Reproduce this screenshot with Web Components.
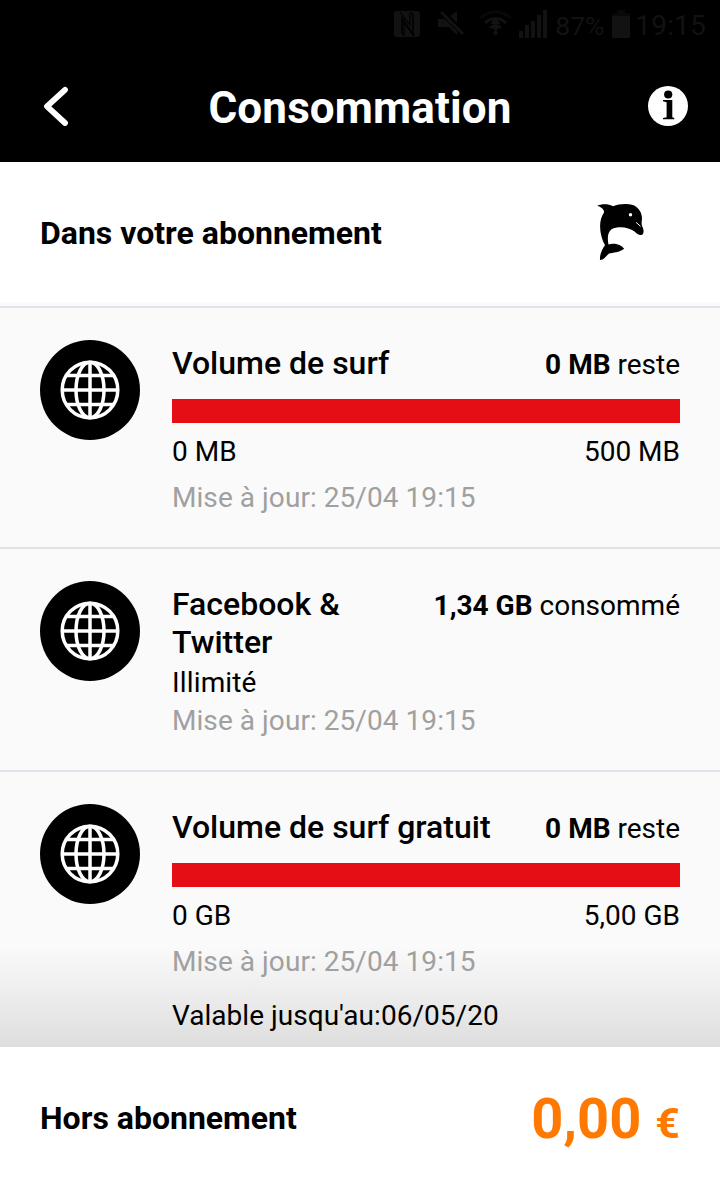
<!DOCTYPE html>
<html lang="fr">
<head>
<meta charset="utf-8">
<title>Consommation</title>
<style>
  body {
    margin: 0;
    width: 720px;
    height: 1187px;
    overflow: hidden;
    display: flex;
    flex-direction: column;
    background: #fff;
    color: #000;
    font-family: Roboto, sans-serif;
  }
  main {
    flex: 1;
    min-height: 0;
    background: #fafafa;
    overflow: hidden;
  }
</style>
</head>
<body>
  <status-bar battery="87%" time="19:15"></status-bar>
  <app-header>Consommation</app-header>
  <plan-heading>Dans votre abonnement</plan-heading>
  <main>
    <usage-item name="Volume de surf" from="0 MB" to="500 MB">
      <b slot="amount">0 MB</b><span slot="amount"> reste</span>
      <span slot="updated">Mise à jour: 25/04 19:15</span>
    </usage-item>
    <usage-item name="Facebook &amp; Twitter" note="Illimité">
      <b slot="amount">1,34 GB</b><span slot="amount"> consommé</span>
      <span slot="updated">Mise à jour: 25/04 19:15</span>
    </usage-item>
    <usage-item name="Volume de surf gratuit" from="0 GB" to="5,00 GB" valid="Valable jusqu'au:06/05/20" last>
      <b slot="amount">0 MB</b><span slot="amount"> reste</span>
      <span slot="updated">Mise à jour: 25/04 19:15</span>
    </usage-item>
  </main>
  <total-bar amount="0,00" currency="€">Hors abonnement</total-bar>

<script>
class StatusBar extends HTMLElement {
  connectedCallback() {
    this.attachShadow({ mode: 'open' });
    this.shadowRoot.innerHTML = `
      <style>
        :host {
          display: flex;
          flex: none;
          align-items: center;
          justify-content: flex-end;
          box-sizing: border-box;
          height: 50px;
          padding-right: 14px;
          background: #000;
          color: #121212;
          font-size: 28px;
        }
        svg {
          display: block;
          fill: currentColor;
        }
        .icons { margin-right: 8px; }
        .percent { font-size: 26.500px; width: 50px; }
        .battery { margin: 0 5px 2px 7px; }
        .time { letter-spacing: .2px; }
      </style>
      <svg class="icons" width="155" height="50" viewBox="391 0 155 50">
        <rect x="393" y="11" width="26" height="26" rx="3"/>
        <path d="M403.500 35.500l-2.500-2.500V18l11 16.500V14.500l-2-2" fill="none" stroke="#000" stroke-width="1.500"/>
        <path d="M399 12l10 13V12.500M413 36l-10-13v12" fill="none" stroke="#000" stroke-width="1.200"/>
        <path d="M437 19h8l11-8v24l-8-8h-11z"/>
        <path d="M440.500 11.500l22.500 22.500" stroke="#000" stroke-width="6"/>
        <path d="M440 12l22 22" stroke="currentColor" stroke-width="2.800"/>
        <path d="M479 18q15.500-12 31 0" fill="none" stroke="#080808" stroke-width="3"/>
        <path d="M484 23q10.500-9 21 0M489 28q5.500-5 11 0" fill="none" stroke="currentColor" stroke-width="3"/>
        <path d="M494.500 17l5 7h-10zM490 27h9l-4.500 4z"/>
        <circle cx="494.500" cy="33" r="2.200"/>
        <path d="M518 31h4v7h-4zM524 25h4v13h-4zM530 21h4v17h-4zM536 15h4v23h-4zM542 10h4v28h-4z"/>
      </svg>
      <span class="percent">${this.getAttribute('battery')}</span>
      <svg class="battery" width="18" height="28" viewBox="0 0 18 28">
        <path d="M5 0h8v3h5v3H0V3h5z" fill="#080808"/>
        <path d="M0 6h18v22H0z"/>
      </svg>
      <span class="time">${this.getAttribute('time')}</span>
    `;
  }
}

class AppHeader extends HTMLElement {
  connectedCallback() {
    this.attachShadow({ mode: 'open' });
    this.shadowRoot.innerHTML = `
      <style>
        :host {
          display: grid;
          flex: none;
          grid-template-columns: 40px 1fr 40px;
          align-items: start;
          box-sizing: border-box;
          height: 112px;
          padding: 32px 32px 0 32px;
          background: #000;
          color: #fff;
        }
        svg { display: block; margin-top: 4px; }
        h1 {
          margin: 0;
          font-size: 44px;
          line-height: 52px;
          font-weight: 700;
          letter-spacing: .13px;
          text-align: center;
        }
      </style>
      <svg width="40" height="40" viewBox="-4 0 40 40" fill="none" stroke="#fff" stroke-width="5.800" stroke-linecap="round" stroke-linejoin="round">
        <path d="M29 3.800L11 20.400L29 37"/>
      </svg>
      <h1><slot></slot></h1>
      <svg width="40" height="40" viewBox="0 0 40 40">
        <circle cx="20" cy="20" r="20" fill="#fff"/>
        <circle cx="20.200" cy="8.500" r="4.100"/>
        <path d="M15 14h9.300v17.300l2 .7v1.300H15V32l3.600-.7V16.200L15 15.300z"/>
      </svg>
    `;
  }
}

class PlanHeading extends HTMLElement {
  connectedCallback() {
    this.attachShadow({ mode: 'open' });
    this.shadowRoot.innerHTML = `
      <style>
        :host {
          display: flex;
          flex: none;
          align-items: center;
          justify-content: space-between;
          box-sizing: border-box;
          height: 146px;
          padding: 0 70px 2px 40px;
          background: linear-gradient(#fff 140px, #fafafa 140px);
          border-bottom: 2px solid #dfe2e8;
        }
        h2 {
          margin: 0;
          font-size: 32px;
          font-weight: 700;
        }
        svg { display: block; }
      </style>
      <h2><slot></slot></h2>
      <svg width="60" height="66" viewBox="590 200 60 66">
        <path d="M597.300 205.800C601 204 608 203.500 613 206.300C619 203.800 627 203.500 633 205C639 207.500 642 213 642 219C641.500 222 641.500 224 642 226C643.500 229 644.500 232 642.500 234.500C640 236 637 234 634.500 231.500C629 227.500 619 225.500 611.500 229.300C608 232 607 237 608.500 244.500C613 242.500 621 244 624.200 248.700C619 252.500 613 252.500 609 253.500C606 256 604 260 600 260C599.500 255 602 249 605 245.300C600 236 597.500 222 604 212.500C604.500 209.500 601 207 597.300 205.800z"/>
        <circle cx="630.500" cy="214.800" r="1.700" fill="#fff"/>
        <path d="M636 222.300l4.500 4" stroke="#fff" stroke-width="1"/>
      </svg>
    `;
  }
}

class GlobeBadge extends HTMLElement {
  connectedCallback() {
    this.attachShadow({ mode: 'open' });
    this.shadowRoot.innerHTML = `
      <style>
        :host {
          display: grid;
          place-items: center;
          width: 100px;
          height: 100px;
          border-radius: 50%;
          background: #000;
        }
        svg { display: block; }
      </style>
      <svg width="60" height="60" viewBox="0 0 60 60" fill="none" stroke="#fff" stroke-width="3.500">
        <circle cx="30" cy="30" r="27.800"/>
        <ellipse cx="30" cy="30" rx="14" ry="27.800"/>
        <path d="M30 2v56M2 30h56M6 15.500h48M6 44.500h48"/>
      </svg>
    `;
  }
}

class UsageItem extends HTMLElement {
  connectedCallback() {
    const name = this.getAttribute('name');
    const note = this.getAttribute('note');
    const valid = this.getAttribute('valid');
    const bar = this.hasAttribute('to') ? `
      <div class="bar"></div>
      <div class="row range">
        <span>${this.getAttribute('from')}</span>
        <span>${this.getAttribute('to')}</span>
      </div>` : '';

    this.attachShadow({ mode: 'open' });
    this.shadowRoot.innerHTML = `
      <style>
        :host {
          display: grid;
          grid-template-columns: 100px 1fr;
          column-gap: 32px;
          align-items: start;
          box-sizing: border-box;
          padding: 32px 40px 30px;
          border-bottom: 2px solid #dfe2e8;
          font-size: 28px;
          line-height: 38px;
        }
        :host([last]) {
          height: 275px;
          padding-bottom: 0;
          border-bottom: 0;
          background: linear-gradient(transparent 175px, #dedede);
        }
        .body { padding-top: 4px; }
        .row {
          display: flex;
          justify-content: space-between;
          align-items: baseline;
        }
        h3 {
          margin: 0;
          font-size: 32px;
          font-weight: 500;
          white-space: pre-line;
        }
        .amount { flex: none; white-space: pre; }
        .bar {
          height: 24px;
          margin: 15px 0 10px;
          background: #e60e15;
        }
        .range { margin-bottom: 8px; }
        .note { margin-top: 3px; letter-spacing: .15px; }
        .updated { color: #a0a0a0; letter-spacing: .06px; }
        .valid { margin-top: 16px; letter-spacing: .03px; }
      </style>
      <globe-badge></globe-badge>
      <div class="body">
        <div class="row">
          <h3>${name.replace('& ', '&amp;\n')}</h3>
          <div class="amount"><slot name="amount"></slot></div>
        </div>
        ${bar}
        ${note ? `<div class="note">${note}</div>` : ''}
        <div class="updated"><slot name="updated"></slot></div>
        ${valid ? `<div class="valid">${valid}</div>` : ''}
      </div>
    `;
  }
}

class TotalBar extends HTMLElement {
  connectedCallback() {
    this.attachShadow({ mode: 'open' });
    this.shadowRoot.innerHTML = `
      <style>
        :host {
          display: flex;
          flex: none;
          align-items: center;
          justify-content: space-between;
          box-sizing: border-box;
          height: 140px;
          padding: 2px 40px 0;
          background: #fff;
          font-size: 32px;
          font-weight: 700;
        }
        .total {
          display: flex;
          align-items: baseline;
          gap: 14px;
          padding-top: 2px;
          color: #ff7900;
          font-size: 56px;
        }
        small { font-size: 43px; }
      </style>
      <span><slot></slot></span>
      <div class="total">
        <span>${this.getAttribute('amount')}</span>
        <small>${this.getAttribute('currency')}</small>
      </div>
    `;
  }
}

customElements.define('status-bar', StatusBar);
customElements.define('app-header', AppHeader);
customElements.define('plan-heading', PlanHeading);
customElements.define('globe-badge', GlobeBadge);
customElements.define('usage-item', UsageItem);
customElements.define('total-bar', TotalBar);
</script>
</body>
</html>
